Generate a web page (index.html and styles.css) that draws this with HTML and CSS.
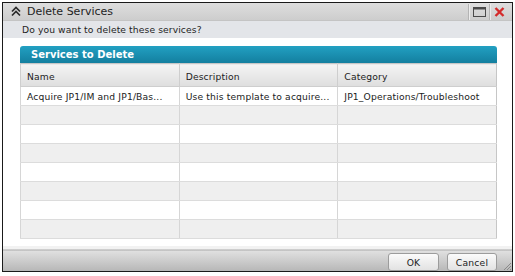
FILE: index.html
```html
<!DOCTYPE html>
<html lang="en">
<head>
    <meta charset="UTF-8">
    <title>Delete Services</title>
    <link rel="stylesheet" href="styles.css">
</head>
<body>
    <div class="dialog">
        <div class="titlebar">
            <svg class="collapse" width="10" height="11" viewBox="0 0 10 11">
                <path d="M1 5.5 L5 1.5 L9 5.5 M1 9.5 L5 5.5 L9 9.5" fill="none" stroke="#2a2a2a" stroke-width="1.7"/>
            </svg>
            <span class="title">Delete Services</span>
            <div class="tools">
                <span class="sep"></span>
                <svg width="13" height="10" viewBox="0 0 13 10">
                    <rect x="0.5" y="0.5" width="12" height="9" fill="none" stroke="#4a4a4a"/>
                    <rect x="0.5" y="0.5" width="12" height="2" fill="#4a4a4a"/>
                </svg>
                <span class="sep"></span>
                <svg width="11" height="10" viewBox="0 0 11 10">
                    <path d="M1.5 1 L9.5 9 M9.5 1 L1.5 9" stroke="#d42b2b" stroke-width="2.4"/>
                </svg>
            </div>
        </div>
        <div class="prompt">Do you want to delete these services?</div>
        <div class="content">
            <div class="panel">
                <div class="panel-head">Services to Delete</div>
                <table class="grid">
                    <thead>
                        <tr>
                            <th>Name</th>
                            <th>Description</th>
                            <th>Category</th>
                        </tr>
                    </thead>
                    <tbody>
                        <tr>
                            <td>Acquire JP1/IM and JP1/Bas...</td>
                            <td>Use this template to acquire...</td>
                            <td>JP1_Operations/Troubleshoot</td>
                        </tr>
                        <tr><td></td><td></td><td></td></tr>
                        <tr><td></td><td></td><td></td></tr>
                        <tr><td></td><td></td><td></td></tr>
                        <tr><td></td><td></td><td></td></tr>
                        <tr><td></td><td></td><td></td></tr>
                        <tr><td></td><td></td><td></td></tr>
                        <tr><td></td><td></td><td></td></tr>
                    </tbody>
                </table>
            </div>
        </div>
        <div class="footer">
            <button class="btn btn-ok">OK</button>
            <button class="btn btn-cancel">Cancel</button>
            <svg class="grip" width="7" height="7" viewBox="0 0 7 7">
                <path d="M0 7 L7 0 M3 7 L7 3 M6 7 L7 6" stroke="#8a8a8a" stroke-width="1"/>
            </svg>
        </div>
    </div>
</body>
</html>
```

FILE: styles.css
```css
body {
    margin: 0;
    background: #fff;
    font-family: "DejaVu Sans", Verdana, sans-serif;
    color: #222;
}
.dialog {
    box-sizing: border-box;
    width: 511px;
    height: 270px;
    margin: 2px 0 0 2px;
    border: 1px solid #1a1a1a;
    display: flex;
    flex-direction: column;
    background: #fff;
    position: relative;
}
.titlebar {
    height: 17px;
    display: flex;
    align-items: center;
    padding-left: 8px;
    background: linear-gradient(#dedede, #cdcdcd);
    border-bottom: 1px solid #c4c4c4;
}
.collapse {
    margin-right: 6px;
}
.title {
    font-size: 11px;
    color: #1e1e1e;
    flex: 1;
}
.tools {
    display: flex;
    align-items: center;
    gap: 3px;
    padding-right: 7px;
}
.sep {
    width: 1px;
    height: 16px;
    background: #b4b4b4;
    border-right: 1px solid #ececec;
}
.prompt {
    height: 17px;
    line-height: 17px;
    padding-left: 19px;
    font-size: 9.2px;
    letter-spacing: 0.1px;
    background: #e3e5e9;
    color: #1e1e1e;
}
.content {
    flex: 1;
    padding: 8px 15px 0 17px;
    background: #fff;
}
.panel-head {
    height: 17px;
    line-height: 18px;
    padding-left: 11px;
    font-size: 10px;
    font-weight: bold;
    color: #fff;
    background: linear-gradient(#22a0c2, #137f9f);
    border-radius: 3px 3px 0 0;
}
.grid {
    width: 100%;
    border-collapse: collapse;
    table-layout: fixed;
    font-size: 9.2px;
    letter-spacing: 0.15px;
    border: 1px solid #c6c6c6;
}
.grid th {
    height: 23px;
    padding: 3px 0 0 6px;
    text-align: left;
    font-weight: normal;
    background: linear-gradient(#f4f4f4, #dedede);
    border-left: 1px solid #cecece;
    border-bottom: 1px solid #cecece;
    box-sizing: border-box;
}
.grid td {
    height: 19px;
    padding: 0 0 0 6px;
    border-left: 1px solid #d6d6d6;
    border-bottom: 1px solid #dcdcdc;
    white-space: nowrap;
    overflow: hidden;
    box-sizing: border-box;
}
.grid tbody tr:nth-child(even) td {
    background: #efefef;
}
.footer {
    height: 25px;
    box-sizing: border-box;
    display: flex;
    justify-content: flex-end;
    align-items: flex-end;
    gap: 8px;
    padding: 0 15px 0 0;
    background: linear-gradient(#f2f2f2 0, #f2f2f2 3px, #a9a9a9 4px, #e0e0e0 5px, #b7b7b7 100%);
    position: relative;
}
.btn {
    height: 18px;
    padding: 0;
    font-family: "DejaVu Sans", Verdana, sans-serif;
    font-size: 9.2px;
    letter-spacing: 0.2px;
    color: #222;
    background: linear-gradient(#fbfbfb, #e2e2e2);
    border: 1px solid #9c9c9c;
    border-radius: 3px;
}
.btn-ok {
    width: 51px;
}
.btn-cancel {
    width: 50px;
}
.grip {
    position: absolute;
    right: 1px;
    bottom: 1px;
}
```
